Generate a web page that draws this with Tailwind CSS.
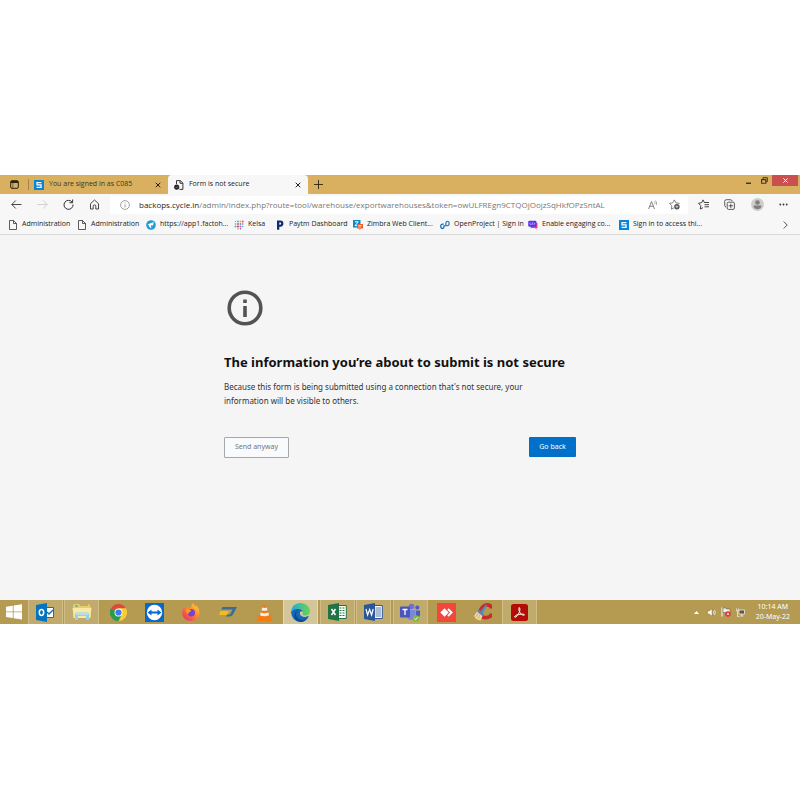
<!DOCTYPE html>
<html lang="en">
<head>
<meta charset="utf-8">
<meta name="viewport" content="width=device-width, initial-scale=1">
<title>Form is not secure</title>
<script src="https://cdn.jsdelivr.net/npm/@tailwindcss/browser@4"></script>
</head>
<body class="bg-white font-['Open_Sans','Noto_Sans',sans-serif] text-[#222]">
<div class="pt-[175px]">

<!-- Tab strip -->
<header class="flex h-[19px] items-stretch bg-[#d8b060] text-[7px]">
  <button aria-label="Tab actions" class="flex w-7 items-center justify-center">
    <svg class="size-[9px]" viewBox="0 0 9 9" fill="none" stroke="#2b2412"><rect x=".7" y=".7" width="7.6" height="7.6" rx="1.3"/><path d="M1 2h7" stroke-width="2"/><path d="M2.8 2v6" stroke-width=".5"/></svg>
  </button>
  <div class="my-1 w-px bg-[#a38550]"></div>
  <div class="flex w-[139px] items-center pl-[5px] pr-1">
    <svg class="size-[10px] shrink-0" viewBox="0 0 10 10"><path fill="#0784d8" d="M0 0h10v10H0z"/><path d="M7.4 2.7H3v2.2h4.1v2.4H2.6" fill="none" stroke="#fff" stroke-width="1.2"/></svg>
    <a href="#" class="ml-[5px] flex-1 whitespace-nowrap text-[#40351c]">You are signed in as C085</a>
    <button aria-label="Close first tab" class="flex size-3 items-center justify-center"><svg class="size-[6px]" viewBox="0 0 6 6" stroke="#2b2412"><path d="m.7.7 4.6 4.6m0-4.6L.7 5.3"/></svg></button>
  </div>
  <div class="flex w-[140px] items-center rounded-t-sm bg-[#f7f7f7] pl-[6px] pr-1">
    <svg class="size-[10px] shrink-0" viewBox="0 0 10 10" fill="none" stroke="#222"><path d="M2.5 4V.6h3.8L8.9 3v6.4H5.5M6 .8v2.5h2.7" stroke-width=".9"/><circle cx="2.7" cy="7.1" r="2.6" fill="#222" stroke="none"/><path d="m1.5 7 1 1 1.5-1.8" stroke="#aaa" stroke-width=".6"/></svg>
    <a href="#" class="ml-[5px] flex-1 whitespace-nowrap">Form is not secure</a>
    <button aria-label="Close second tab" class="flex size-3 items-center justify-center"><svg class="size-[6px]" viewBox="0 0 6 6" stroke="#222"><path d="m.7.7 4.6 4.6m0-4.6L.7 5.3"/></svg></button>
  </div>
  <button aria-label="New tab" class="flex w-5 items-center justify-center"><svg class="size-[9px]" viewBox="0 0 9 9" stroke="#2b2412" stroke-width=".9"><path d="M4.5 0v9M0 4.5h9"/></svg></button>
  <div class="ml-auto flex h-[11px] items-stretch">
    <button aria-label="Minimise" class="flex w-4 items-center justify-center"><svg class="h-2 w-[5px]" viewBox="0 0 5 8"><path d="M0 5.5h5V7H0z" fill="#44381d"/></svg></button>
    <button aria-label="Restore" class="flex w-4 items-center justify-center"><svg class="size-[7px]" viewBox="0 0 7 7" fill="none" stroke="#44381d"><path d="M2 2V.7h4.3v4H5"/><path d="M.6 2.6h4.2v3.6H.6z" stroke-width="1.1"/></svg></button>
    <button aria-label="Close window" class="mr-[2px] flex w-[26px] items-center justify-center bg-[#c9504f]"><svg class="size-[5px]" viewBox="0 0 5 5" stroke="#fff"><path d="m.4.4 4.2 4.2m0-4.2L.4 4.6"/></svg></button>
  </div>
</header>

<!-- Address bar -->
<nav class="flex h-[21px] items-center bg-[#f7f7f7]">
  <div class="flex w-[110px] shrink-0 items-center gap-[15px] pl-[11px]">
    <button aria-label="Back"><svg class="size-[11px]" viewBox="0 0 11 11" fill="none" stroke="#333" stroke-width=".9"><path d="M10.5 5.5H.8M4.8 1.5l-4 4 4 4"/></svg></button>
    <button aria-label="Forward"><svg class="size-[11px]" viewBox="0 0 11 11" fill="none" stroke="#ccc" stroke-width=".9"><path d="M.5 5.5h9.7M6.2 1.5l4 4-4 4"/></svg></button>
    <button aria-label="Refresh"><svg class="size-[11px]" viewBox="0 0 11 11" fill="none" stroke="#333" stroke-width="1"><path d="M9.3 3.4A4.5 4.5 0 1 0 10 5.5M9.6.5v3.2H6.4"/></svg></button>
    <button aria-label="Home"><svg class="size-[11px]" viewBox="0 0 11 11" fill="none" stroke="#333" stroke-width=".9"><path d="M1.5 4.7 5.5 1l4 3.7V10H6.8V7.2a1.3 1.3 0 0 0-2.6 0V10H1.5z" stroke-linejoin="round"/></svg></button>
  </div>
  <div class="flex h-[18px] min-w-0 flex-1 items-center rounded-[2px] bg-white pl-[10px]">
    <svg class="size-[10px] shrink-0" viewBox="0 0 10 10" fill="none" stroke="#777" stroke-width=".7"><circle cx="5" cy="5" r="4.4"/><path d="M5 4.5v3M5 2.5v1"/></svg>
    <a href="#" aria-label="Page address" class="ml-[9px] flex-1 whitespace-nowrap text-[8px] text-[#777]"><span class="text-[#222]">backops.cycle.in</span>/admin/index.php?route=tool/warehouse/exportwarehouses&amp;token=owULFREgn9CTQOjOojzSqHkfOPzSntAL</a>
    <button aria-label="Read aloud" class="mr-3"><svg class="size-[10px]" viewBox="0 0 10 10" fill="none" stroke="#666" stroke-width=".8"><path d="M1.600 9 4.500 1.500 7.500 9M2.600 6.300h4"/><path d="M7.300 1.500q1 1 .5 2.600M8.600.6q1.600 1.800.8 4.200" stroke-width=".6"/></svg></button>
    <button aria-label="Add to favourites" class="mr-2"><svg class="size-[11px]" viewBox="0 0 11 11" fill="none" stroke="#666" stroke-width=".8"><path d="M9.8 5 10.3 4.4 7 3.8 5.3.9 3.7 3.8.5 4.4l2.3 2.4-.4 3.4 2.6-1.3" stroke-linejoin="round"/><circle cx="7.9" cy="7.7" r="2.7" fill="#555" stroke="none"/><path d="M7.9 6.3v2.8M6.5 7.7h2.8" stroke="#fff" stroke-width=".6"/></svg></button>
  </div>
  <div class="flex w-[112px] shrink-0 items-center justify-between pl-[10px] pr-3">
    <button aria-label="Favourites"><svg class="size-[11px]" viewBox="0 0 11 11" fill="none" stroke="#333" stroke-width=".9"><path d="M7.7 3.5H6.4L5 .9 3.7 3.7.5 4.3 2.8 6.6l-.5 3.5L5 8.6M7 3.5h4M6.5 5.7H11M6.5 7.8H11"/></svg></button>
    <button aria-label="Collections"><svg class="size-[11px]" viewBox="0 0 11 11" fill="none" stroke="#333" stroke-width=".8"><rect x="3.2" y="3.2" width="7.2" height="7.2" rx="1.3"/><path d="M6.8 4.7V9M4.7 6.8H9M2 8.3Q.8 7.7.7 6.2V2.3Q.8.8 2.3.7h4Q7.9.8 8.3 2"/></svg></button>
    <button aria-label="Profile"><svg class="size-[13px]" viewBox="0 0 13 13"><circle cx="6.5" cy="6.5" r="6.5" fill="#cfcdca"/><circle cx="6.5" cy="4.5" r="2.3" fill="#817e7b"/><path d="M2.6 7.6h7.8q.2 3.5-3.9 3.6-4.100-.1-3.900-3.600z" fill="#817e7b"/></svg></button>
    <button aria-label="More"><svg class="size-[9px]" viewBox="0 0 9 9" fill="#333"><circle cx="1.300" cy="4.500" r=".9"/><circle cx="4.500" cy="4.500" r=".9"/><circle cx="7.700" cy="4.500" r=".9"/></svg></button>
  </div>
</nav>

<!-- Bookmarks -->
<nav class="flex h-5 items-center border-b border-[#dadada] bg-[#f7f7f7] pl-2 text-[7px] whitespace-nowrap">
  <a href="#" class="flex w-[69px] items-center gap-1"><svg class="size-[10px]" viewBox="0 0 10 10" fill="none" stroke="#333" stroke-width=".8"><path d="M1.500.5h4l3 3v6h-7zM5.500.5v3h3"/></svg>Administration</a>
  <a href="#" class="flex w-[69px] items-center gap-1"><svg class="size-[10px]" viewBox="0 0 10 10" fill="none" stroke="#333" stroke-width=".8"><path d="M1.500.5h4l3 3v6h-7zM5.500.5v3h3"/></svg>Administration</a>
  <a href="#" class="flex w-[88px] items-center gap-1"><svg class="size-[10px]" viewBox="0 0 10 10"><circle cx="5" cy="5" r="4.800" fill="#2499d3"/><path d="M2 4.200 7.800 2 7 5.400 4.900 5.200 5.300 8.200 3.900 7.600z" fill="#fff"/></svg>https://app1.factoh...</a>
  <a href="#" class="flex w-[41px] items-center gap-1"><svg class="size-[10px]" viewBox="0 0 10 10"><g fill="#e8558a"><circle cx="1.500" cy="1.500" r=".6"/><circle cx="4" cy="4" r="1.100"/><circle cx="6.500" cy="6.500" r="1"/><circle cx="8.800" cy="1.500" r="1"/></g><g fill="#45a5dc"><circle cx="4" cy="1.500" r=".9"/><circle cx="1.500" cy="6.500" r="1"/><circle cx="8.800" cy="6.500" r=".7"/><circle cx="6.500" cy="4" r=".9"/></g><g fill="#efaa3c"><circle cx="6.500" cy="1.500" r=".9"/><circle cx="1.500" cy="4" r=".9"/><circle cx="4" cy="8.800" r=".9"/></g><g fill="#7a5296"><circle cx="4" cy="6.500" r="1"/><circle cx="8.800" cy="4" r=".7"/><circle cx="6.500" cy="8.800" r=".7"/></g></svg>Kelsa</a>
  <a href="#" class="flex w-[78px] items-center gap-1"><svg class="size-[10px]" viewBox="0 0 10 10"><path fill="#0c2f6e" fill-rule="evenodd" d="M2 .5h3.400q3 .1 3 3t-3 3.200H4.300v3H2zM4.300 2.500v2.300h.8q1.100-.1 1.100-1.200T5.100 2.500z"/></svg>Paytm Dashboard</a>
  <a href="#" class="flex w-[87px] items-center gap-1"><svg class="size-[10px]" viewBox="0 0 10 10"><path fill="#0787c3" d="M0 0h7.500v7.500H0z"/><path d="M1.800 1.800h3.500L2 5.600h3" fill="none" stroke="#fff"/><path fill="#f05a28" d="M4 4h6v4.500H8L6.500 10V8.500H4z"/><path d="M5.300 5.500h3.500M5.300 7h2.700" stroke="#fff" stroke-width=".7"/></svg>Zimbra Web Client...</a>
  <a href="#" class="flex w-[88px] items-center gap-1"><svg class="size-[10px]" viewBox="0 0 10 10" fill="none" stroke-width="1.300"><path d="M3.800 4.200H2.400Q.8 4.300.8 6v1q.1 1.500 1.600 1.500T4 7V5.500" stroke="#1b66a4"/><path d="M4 5.700h3.500q1.600-.1 1.600-1.700V3Q9 1.400 7.500 1.400T5.900 3v3" stroke="#2f83c0"/></svg>OpenProject | Sign in</a>
  <a href="#" class="flex w-[91px] items-center gap-1"><svg class="size-[10px]" viewBox="0 0 10 10"><path fill="#ef3e78" d="M4 3h5.500v5H8.500v1.500L7 8H4z"/><path fill="#5b35e8" d="M1.500.7h5.800q1.200.1 1.200 1.300v3.500q-.1 1.200-1.200 1.300H4.500L2.700 8.400V6.800H1.500Q.3 6.700.2 5.500V2Q.3.8 1.500.7z"/><path d="M2.700 2.700 1.700 3.800l1 1M5.800 2.700l1 1.100-1 1M4.700 2.500 3.800 5" stroke="#fff" stroke-width=".6" fill="none"/></svg>Enable engaging co...</a>
  <a href="#" class="flex items-center gap-1"><svg class="size-[10px]" viewBox="0 0 10 10"><path fill="#0784d8" d="M0 0h10v10H0z"/><path d="M7.400 2.700H3v2.200h4.100v2.400H2.600" fill="none" stroke="#fff" stroke-width="1.200"/></svg>Sign in to access thi...</a>
  <button aria-label="More bookmarks" class="mr-3 ml-auto"><svg class="h-2 w-[5px]" viewBox="0 0 5 8" fill="none" stroke="#444" stroke-width=".9"><path d="m.7.5 3.500 3.500-3.500 3.500"/></svg></button>
</nav>

<!-- Warning -->
<main class="bg-[#f5f5f5] pt-[55px] pb-[142px] font-['Noto_Sans','Open_Sans',sans-serif]">
  <div class="mx-auto w-[352px]">
    <svg class="ml-[3px] size-9" viewBox="0 0 36 36"><circle cx="18" cy="18" r="15.800" fill="none" stroke="#535353" stroke-width="3.600"/><path d="M16.200 9.500h3.600V13h-3.600zM16.200 16h3.600v11h-3.600z" fill="#535353"/></svg>
    <h1 class="mt-[27px] text-[13px] leading-[18px] font-bold whitespace-nowrap text-[#111]">The information you’re about to submit is not secure</h1>
    <p class="mt-[9px] text-[8px] leading-[14px] text-[#333]">Because this form is being submitted using a connection that's not secure, your<br>information will be visible to others.</p>
    <div class="mt-7 flex items-start justify-between text-[7px]">
      <button class="mt-px h-[21px] w-[65px] rounded-[1px] border border-[#a3a8ad] bg-[#f9fafc] text-[#777]">Send anyway</button>
      <button class="mt-px h-5 w-[47px] rounded-[1px] bg-[#0070c9] text-white">Go back</button>
    </div>
  </div>
</main>

<!-- Taskbar -->
<footer class="flex h-6 items-stretch bg-[#b59a52] pl-[6px]">
  <button aria-label="Start" class="flex w-[21px] items-center"><svg class="size-[16px]" viewBox="0 0 16 16" fill="#fff"><path d="M0 2.700 6.800 1.700v5.800H0zM7.600 1.600 16 .3v7.200H7.600zM0 8.300h6.800V14L0 13.100zM7.600 8.300H16v7.200l-8.400-1.300z"/></svg></button>
  <div class="grid w-[511px] grid-cols-14 items-stretch justify-items-center">
    <button aria-label="Outlook" class="flex w-[35px] items-center justify-center border-x border-[#d0bd88] bg-[#c1ab6c]"><svg class="h-[19px] w-[18px]" viewBox="0 0 18 19"><path d="M8 4.500h9.500v10H8z" fill="#fff" stroke="#0872bd"/><path d="m11 9 2 2 4-4" fill="none" stroke="#0872bd" stroke-width="1.400"/><path fill="#0872bd" d="M0 2 11 0v19L0 17z"/><ellipse cx="5.500" cy="9.500" rx="2.200" ry="2.900" fill="none" stroke="#fff" stroke-width="1.500"/></svg></button>
    <button aria-label="File Explorer" class="flex w-[35px] items-center justify-center border-x border-[#d0bd88] bg-[#c1ab6c]"><svg class="h-[18px] w-5" viewBox="0 0 20 18"><path fill="#e9cf68" d="M1 2.500 2 1h5l1 2h8V1.500h2V4h1v11H1z"/><path fill="#67b7ca" d="M3 2h3v2H3z"/><path fill="#f8eaa4" d="M.5 5h19L18 15H2z"/><path fill="#95cfe9" d="M3 11q0-1.500 2-1.500h10q2 0 2 1.500v6h-3v-4H6v4H3z"/><path d="M4 11h12" stroke="#d6f0fa"/></svg></button>
    <button aria-label="Chrome" class="flex w-[35px] items-center justify-center"><svg class="size-[17px]" viewBox="0 0 18 18"><path fill="#df4a38" d="M9 9 1.200 4.500a9 9 0 0 1 15.600 0z"/><path fill="#2c9b4f" d="M9 9v9A9 9 0 0 1 1.200 4.500z"/><path fill="#f9cb37" d="M9 9V4.500h7.800A9 9 0 0 1 9 18l3.500-7z"/><path fill="#2c9b4f" d="M1.200 4.500 5.500 11 9 13l3-1-3 6A9 9 0 0 1 1.200 4.500"/><circle cx="9" cy="9" r="4.200" fill="#fff"/><circle cx="9" cy="9" r="3.300" fill="#3b7dea"/></svg></button>
    <button aria-label="TeamViewer" class="flex w-[35px] items-center justify-center"><svg class="size-[19px]" viewBox="0 0 19 19"><path fill="#0869cc" d="M0 0h19v19H0z"/><circle cx="9.500" cy="9.500" r="7.700" fill="#fff"/><path fill="#0869cc" d="m2.500 9.500 4-3v2h6v-2l4 3-4 3v-2h-6v2z"/></svg></button>
    <button aria-label="Firefox" class="flex w-[35px] items-center justify-center"><svg class="size-[18px]" viewBox="0 0 18 18"><defs><linearGradient id="fox" x1="1" y1="0" x2=".1" y2="1"><stop stop-color="#ffe33f"/><stop offset=".45" stop-color="#ff8b29"/><stop offset="1" stop-color="#ef2867"/></linearGradient></defs><path fill="url(#fox)" d="M2.500 3.500 3.300 5 6 3.400l1 1.500 2 .1Q8.500 2 11.500 0q.1 2 2.500 3.500l.8-.8q4.500 5.800 1.600 10.800Q13 18 8.800 18 1.600 17.500.2 11 0 6.500 2.500 3.500z"/><circle cx="9.300" cy="9.800" r="3.700" fill="#7542d4"/><path fill="#ff9d2a" d="m4 6 3.500.3L9.500 8 7.300 9 6 11.500Q4 10 4 6z"/></svg></button>
    <button aria-label="Database client" class="flex w-[35px] items-center justify-center"><svg class="h-[10px] w-[18px]" viewBox="0 0 18 10"><path d="M3.500 0H18l-4 7.500q-1 2-3.500 2H6.800L8 7.700q3 0 3.700-1.500L13.500 2.500H2.300z" fill="#386d99"/><path d="M1.200 4H10L7.700 8H0z" fill="#efbd20"/></svg></button>
    <button aria-label="VLC" class="flex w-[35px] items-center justify-center"><svg class="size-[17px]" viewBox="0 0 17 17"><path d="M2.500 11h12l2 6H.5z" fill="#f17c13"/><path d="M7 1q1.500-1 3 0l3.500 12q-5 2.500-10 0z" fill="#f37a14"/><path d="m6.200 3.500-.8 2.700q3 1.300 6.200 0l-.8-2.700q-2 .8-4.600 0zM4.700 8.500l-.8 2.700q4.500 2 9.200 0l-.8-2.700q-4 1.500-7.600 0z" fill="#f4eee5"/></svg></button>
    <button aria-label="Edge" class="flex w-[35px] items-center justify-center border-x border-[#e3d8b7] bg-[#d3c69b]"><svg class="size-[19px]" viewBox="0 0 19 19"><defs><linearGradient id="wave"><stop stop-color="#20a9dc"/><stop offset="1" stop-color="#69d64c"/></linearGradient></defs><path fill="#1268b6" d="M0 9Q2 4 7 5.500 12 6 12 9q-2-1.500-3 0-1 4 4 5 2 .2 4-1 1 0 .5 1-3 5-8 5Q1 18.500 0 9z"/><path fill="url(#wave)" d="M0 9Q.5.500 9.500 0 18 .5 19 8q-.5 5-5.500 4.500-2.500-.2-2-1.500Q13 9 10.500 6.500 5 3.500 0 9z"/><path fill="#0c4794" d="M7 7q-4 4-.5 8 4 4 10 .3-3 4-7.500 3.700-6-1.500-5.500-7Q4 8.500 7 7z"/></svg></button>
    <button aria-label="Excel" class="flex w-[35px] items-center justify-center border-x border-[#d0bd88] bg-[#c1ab6c]"><svg class="h-[18px] w-[19px]" viewBox="0 0 19 18"><path fill="#fff" stroke="#207346" d="M9 2.500h9.300v13H9z"/><path d="M11.500 5h5M11.500 7.500h5M11.500 10h5M11.500 12.500h5" stroke="#207346" stroke-width="1.200" stroke-dasharray="2 1"/><path fill="#207346" d="M0 2 11 0v18L0 16z"/><path d="m3.500 6 4 6m0-6-4 6" stroke="#fff" stroke-width="1.500"/></svg></button>
    <button aria-label="Word" class="flex w-[35px] items-center justify-center border-x border-[#d0bd88] bg-[#c1ab6c]"><svg class="h-[18px] w-[19px]" viewBox="0 0 19 18"><path fill="#fff" stroke="#2a579a" d="M9 2.500h9.300v13H9z"/><path d="M11.500 5h5.500M11.500 7h5.500M11.500 9h5.500M11.500 11h5.500M11.500 13h5.500" stroke="#2a579a" stroke-width=".8"/><path fill="#2a579a" d="M0 2 11 0v18L0 16z"/><path d="m2 6 1.600 6 2-5.500 2 5.500L9.200 6" stroke="#fff" stroke-width="1.200" fill="none"/></svg></button>
    <button aria-label="Teams" class="flex w-[35px] items-center justify-center border-x border-[#d0bd88] bg-[#c1ab6c]"><svg class="h-[19px] w-5" viewBox="0 0 20 19"><circle cx="11.500" cy="3.500" r="2.800" fill="#6973cd"/><circle cx="17.300" cy="4.500" r="2" fill="#5059c1"/><path d="M7 7h8.500v6q-1 4-4.500 4T7 14z" fill="#7c85dc"/><path d="M16 7.500h4V12q-.5 3-4 3z" fill="#5059c1"/><rect y="3.500" width="10" height="11" rx="1" fill="#4c55ba"/><path d="M2.500 6.500h5M5 6.500V12" stroke="#fff" stroke-width="1.300"/><circle cx="16" cy="15.500" r="3.300" fill="#7bbc30"/><path d="m14.300 15.500 1.200 1.200 2.300-2.400" fill="none" stroke="#fff"/></svg></button>
    <button aria-label="AnyDesk" class="flex w-[35px] items-center justify-center"><svg class="size-[19px]" viewBox="0 0 19 19"><path fill="#f4473c" d="M0 0h19v19H0z"/><path fill="#fff" d="m7.500 5.300 4.200 4.200-4.200 4.200-4.200-4.200zM10.300 6.700l1.400-1.400 4.200 4.200-4.200 4.200-1.400-1.400 2.800-2.800z"/></svg></button>
    <button aria-label="CCleaner" class="flex w-[35px] items-center justify-center"><svg class="size-[18px]" viewBox="0 0 18 18"><path d="M17 5.500V3Q12 .5 8.500 4t-2 8.500q4 4 10.500.5v-2.500" fill="none" stroke="#c82c2a" stroke-width="3.600"/><path d="m6.500 8 5.500-6.500 1 1L9 10z" fill="#508fc0"/><path d="m5 6.500 5 4.500-1.500 2-5.500-4z" fill="#438bc2"/><path d="m3 8.500 5.500 4.500-2 4.500Q2 17 0 13z" fill="#f2d7a2"/><path d="m4 10-2 4m4-2.500L4 16" stroke="#c79c65" stroke-width=".7"/></svg></button>
    <button aria-label="Acrobat" class="flex w-[35px] items-center justify-center border-x border-[#d0bd88] bg-[#c1ab6c]"><svg class="size-[17px]" viewBox="0 0 17 17"><rect width="17" height="17" rx="2.500" fill="#b30c05"/><path d="M8 3.500q1.500-.2.800 3.500Q7.500 11 5 13q-1.500.8-1.500-.5 1-2.200 8-2.500 2 .1 2 1-1.300 1.300-4-1.500Q7 6 8 3.500z" fill="none" stroke="#fff" stroke-width=".9"/></svg></button>
  </div>
  <div class="ml-auto flex items-center gap-[5px] pr-[10px]">
    <button aria-label="Show hidden icons" class="mr-[3px]"><svg class="h-[3px] w-[5px]" viewBox="0 0 5 3"><path d="M2.500 0 5 3H0z" fill="#fff"/></svg></button>
    <button aria-label="Volume"><svg class="size-[9px]" viewBox="0 0 9 9"><path d="M.5 3h1.800L5 .8v7.400L2.300 6H.5z" fill="#fff" stroke="#675d42" stroke-width=".4"/><path d="M6.200 3q1 1.500 0 3M7.500 2q1.800 2.500 0 5" fill="none" stroke="#fff" stroke-width=".7"/></svg></button>
    <button aria-label="Action centre"><svg class="size-[10px]" viewBox="0 0 10 10"><path d="M1 .5V9.500" stroke="#fff"/><path d="M2 1h3l.5 1H9v4.500H5.500L5 5.500H2z" fill="#eee" stroke="#5e5749" stroke-width=".5"/><circle cx="7" cy="7" r="2.800" fill="#dc3b37"/><path d="m5.900 5.900 2.200 2.200m0-2.200L5.900 8.100" stroke="#fff" stroke-width=".7"/></svg></button>
    <button aria-label="Network"><svg class="size-[9px]" viewBox="0 0 9 9" fill="none" stroke="#eee" stroke-width=".8"><path d="M3 2h5.500v4H3z" fill="#5e5749"/><path d="M4 8h3.500M5.800 6v2M.5.500v2.300h2V.5M1.500 3v5.500h1.800"/></svg></button>
    <time class="ml-[6px] text-center font-['Noto_Sans','Open_Sans',sans-serif] text-[7px] leading-[10px] whitespace-nowrap text-white">10:14 AM<br>20-May-22</time>
  </div>
</footer>
</div>
</body>
</html>
